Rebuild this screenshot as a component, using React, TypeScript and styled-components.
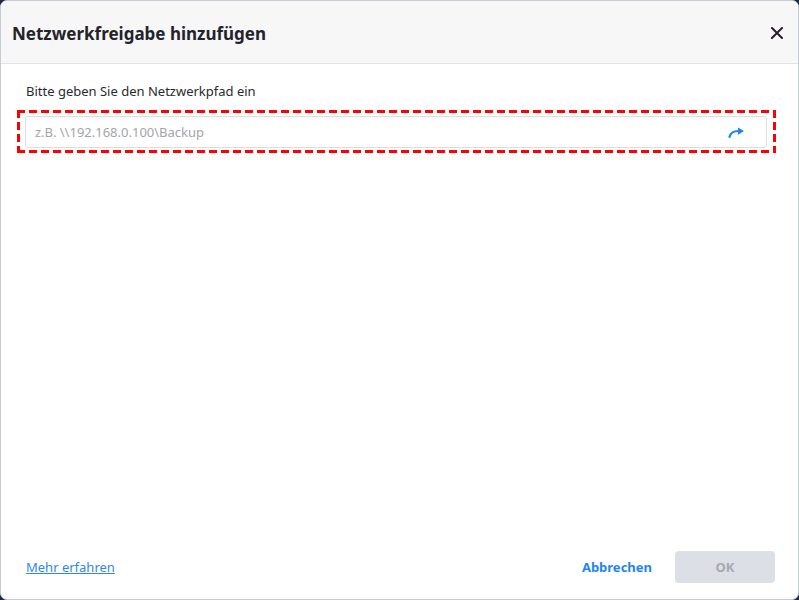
import React from "react";
import styled, { createGlobalStyle } from "styled-components";

const Global = createGlobalStyle`
  html, body { margin: 0; padding: 0; background: #1f2a44; }
  body { font-family: "Noto Sans", "Open Sans", sans-serif; }
  #root { width: 799px; height: 600px; }
`;

const Window = styled.div`
  box-sizing: border-box;
  width: 799px;
  height: 600px;
  background: #ffffff;
  border: 1px solid #c7cbd4;
  border-radius: 7px;
  overflow: hidden;
  display: flex;
  flex-direction: column;
`;

const Header = styled.div`
  flex: none;
  background: #f7f7f8;
  border-bottom: 1px solid #e2e3e6;
  display: flex;
  align-items: center;
  justify-content: space-between;
  padding: 2px 13px 0 11px;
  box-sizing: border-box;
  height: 63px;
`;

const Title = styled.h1`
  margin: 0;
  font-size: 17px;
  font-weight: 700;
  color: #23232b;
`;

const Close = styled.button`
  border: none;
  background: transparent;
  padding: 0;
  width: 16px;
  height: 16px;
  display: flex;
  align-items: center;
  justify-content: center;
  cursor: pointer;
`;

const Body = styled.div`
  flex: 1;
  display: flex;
  flex-direction: column;
  padding: 18px 22px 0 16px;
`;

const Label = styled.div`
  font-size: 13px;
  color: #2a2a2a;
  padding-left: 9px;
  line-height: 18px;
`;

const dash = "#ff0000";
const Highlight = styled.div`
  margin-top: 10px;
  padding: 6px 9px 5px 8px;
  background-image:
    repeating-linear-gradient(90deg, ${dash} 0 8px, transparent 8px 12px),
    repeating-linear-gradient(90deg, ${dash} 0 8px, transparent 8px 12px),
    repeating-linear-gradient(180deg, ${dash} 0 8px, transparent 8px 12px),
    repeating-linear-gradient(180deg, ${dash} 0 8px, transparent 8px 12px);
  background-size: 100% 3px, 100% 3px, 3px 100%, 3px 100%;
  background-position: 0 0, 0 100%, 0 0, 100% 0;
  background-repeat: no-repeat;
`;

const InputBox = styled.div`
  height: 30px;
  border: 1px solid #dcdde1;
  border-radius: 3px;
  display: flex;
  align-items: center;
  justify-content: space-between;
  padding: 0 21px 0 9px;
`;

const Placeholder = styled.span`
  font-size: 13px;
  color: #a3a5aa;
`;

const Footer = styled.div`
  height: 64px;
  flex: none;
  display: flex;
  align-items: center;
  justify-content: space-between;
  padding: 0 23px 0 25px;
  box-sizing: border-box;
`;

const Link = styled.a`
  font-size: 13px;
  color: #2f8ae5;
  text-decoration: underline;
  cursor: pointer;
`;

const Actions = styled.div`
  display: flex;
  align-items: center;
  gap: 23px;
`;

const TextButton = styled.button`
  border: none;
  background: transparent;
  font-family: inherit;
  font-size: 13px;
  font-weight: 700;
  color: #1f86f0;
  padding: 0;
  cursor: pointer;
`;

const PrimaryButton = styled.button<{ $disabled?: boolean }>`
  width: 100px;
  height: 32px;
  border: none;
  border-radius: 4px;
  font-family: inherit;
  font-size: 13px;
  font-weight: 700;
  background: ${(p) => (p.$disabled ? "#dcdfe5" : "#1f86f0")};
  color: ${(p) => (p.$disabled ? "#a7a9b0" : "#fff")};
`;

export default function App() {
  return (
    <>
      <Global />
      <Window>
        <Header>
          <Title>Netzwerkfreigabe hinzufügen</Title>
          <Close aria-label="Schließen">
            <svg width="12" height="12" viewBox="0 0 12 12">
              <path d="M1 1 L11 11 M11 1 L1 11" stroke="#2b1f2a" strokeWidth="2" strokeLinecap="square" />
            </svg>
          </Close>
        </Header>
        <Body>
          <Label>Bitte geben Sie den Netzwerkpfad ein</Label>
          <Highlight>
            <InputBox>
              <Placeholder>z.B. \\192.168.0.100\Backup</Placeholder>
              <svg width="17" height="11" viewBox="0 0 17 11">
                <path d="M1.5 10 C2.5 5.5 6 3.8 11 4" stroke="#1f86f0" strokeWidth="2.2" fill="none" strokeLinecap="round" />
                <path d="M10 0.5 L16 4 L10 7.8 Z" fill="#1f86f0" />
              </svg>
            </InputBox>
          </Highlight>
        </Body>
        <Footer>
          <Link>Mehr erfahren</Link>
          <Actions>
            <TextButton>Abbrechen</TextButton>
            <PrimaryButton $disabled>OK</PrimaryButton>
          </Actions>
        </Footer>
      </Window>
    </>
  );
}
